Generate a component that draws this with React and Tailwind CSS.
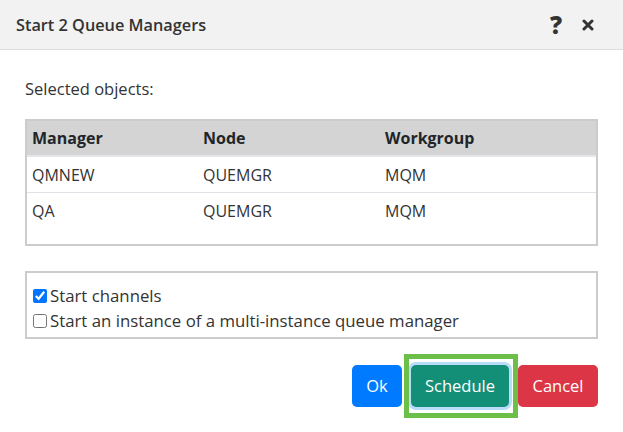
export default function App() {
  const rows = [
    { manager: "QMNEW", node: "QUEMGR", group: "MQM" },
    { manager: "QA", node: "QUEMGR", group: "MQM" },
  ];

  return (
    <div className="w-[623px] h-[432px] bg-white text-[#333333] font-['Open_Sans',sans-serif] overflow-hidden">
      {/* header */}
      <div className="h-[50px] bg-[#f2f2f2] border-b border-[#dddddd] flex items-center pl-4 pr-[29px]">
        <h2 className="flex-1 text-[16.3px] font-semibold pt-[1px]">Start 2 Queue Managers</h2>
        <span className="text-[24px] font-extrabold leading-none mr-[20px]">?</span>
        <svg width="12" height="12" viewBox="0 0 12 12">
          <path d="M2 2 L10 10 M10 2 L2 10" stroke="#333" strokeWidth="3" strokeLinecap="round" />
        </svg>
      </div>

      <div className="px-[25px]">
        <p className="mt-[28px] text-[16.5px] leading-[22px]">Selected objects:</p>

        <div className="mt-[19px] h-[127px] border-2 border-[#cccccc] text-[16px]">
          <div className="grid grid-cols-[171px_182px_1fr] h-[36px] items-center px-[5px] bg-[#d4d4d4] font-bold text-[#212529] border-b-2 border-[#e4e6ea]">
            <span>Manager</span>
            <span>Node</span>
            <span>Workgroup</span>
          </div>
          {rows.map((r, i) => (
            <div
              key={r.manager}
              className={`grid grid-cols-[171px_182px_1fr] h-[36px] items-center px-[5px] ${i === 0 ? "border-b border-[#dee2e6]" : ""}`}
            >
              <span>{r.manager}</span>
              <span>{r.node}</span>
              <span>{r.group}</span>
            </div>
          ))}
        </div>

        <div className="mt-[25px] h-[68px] border-2 border-[#cccccc] px-[6px] pt-[10px] text-[16.8px] leading-[25px]">
          <label className="flex items-center gap-[3px]">
            <input type="checkbox" defaultChecked className="w-[14px] h-[14px] accent-[#0075ff] m-0" />
            <span>Start channels</span>
          </label>
          <label className="flex items-center gap-[3px]">
            <input type="checkbox" className="w-[14px] h-[14px] m-0" />
            <span>Start an instance of a multi-instance queue manager</span>
          </label>
        </div>

        <div className="mt-[26px] flex justify-end gap-[9px] text-[16.5px]">
          <button className="w-[50px] h-[42px] rounded-[5px] bg-[#007bff] text-white">Ok</button>
          <div className="relative">
            <button className="w-[98px] h-[42px] rounded-[5px] bg-[#148f77] text-white shadow-[0_0_0_3px_#b9dcf8]">
              Schedule
            </button>
            <span className="absolute -left-[7px] -right-[9px] -top-[11px] -bottom-[11px] border-[5px] border-[#6cc04a] pointer-events-none" />
          </div>
          <button className="w-[80px] h-[42px] rounded-[5px] bg-[#dc3545] text-white">Cancel</button>
        </div>
      </div>
    </div>
  );
}
